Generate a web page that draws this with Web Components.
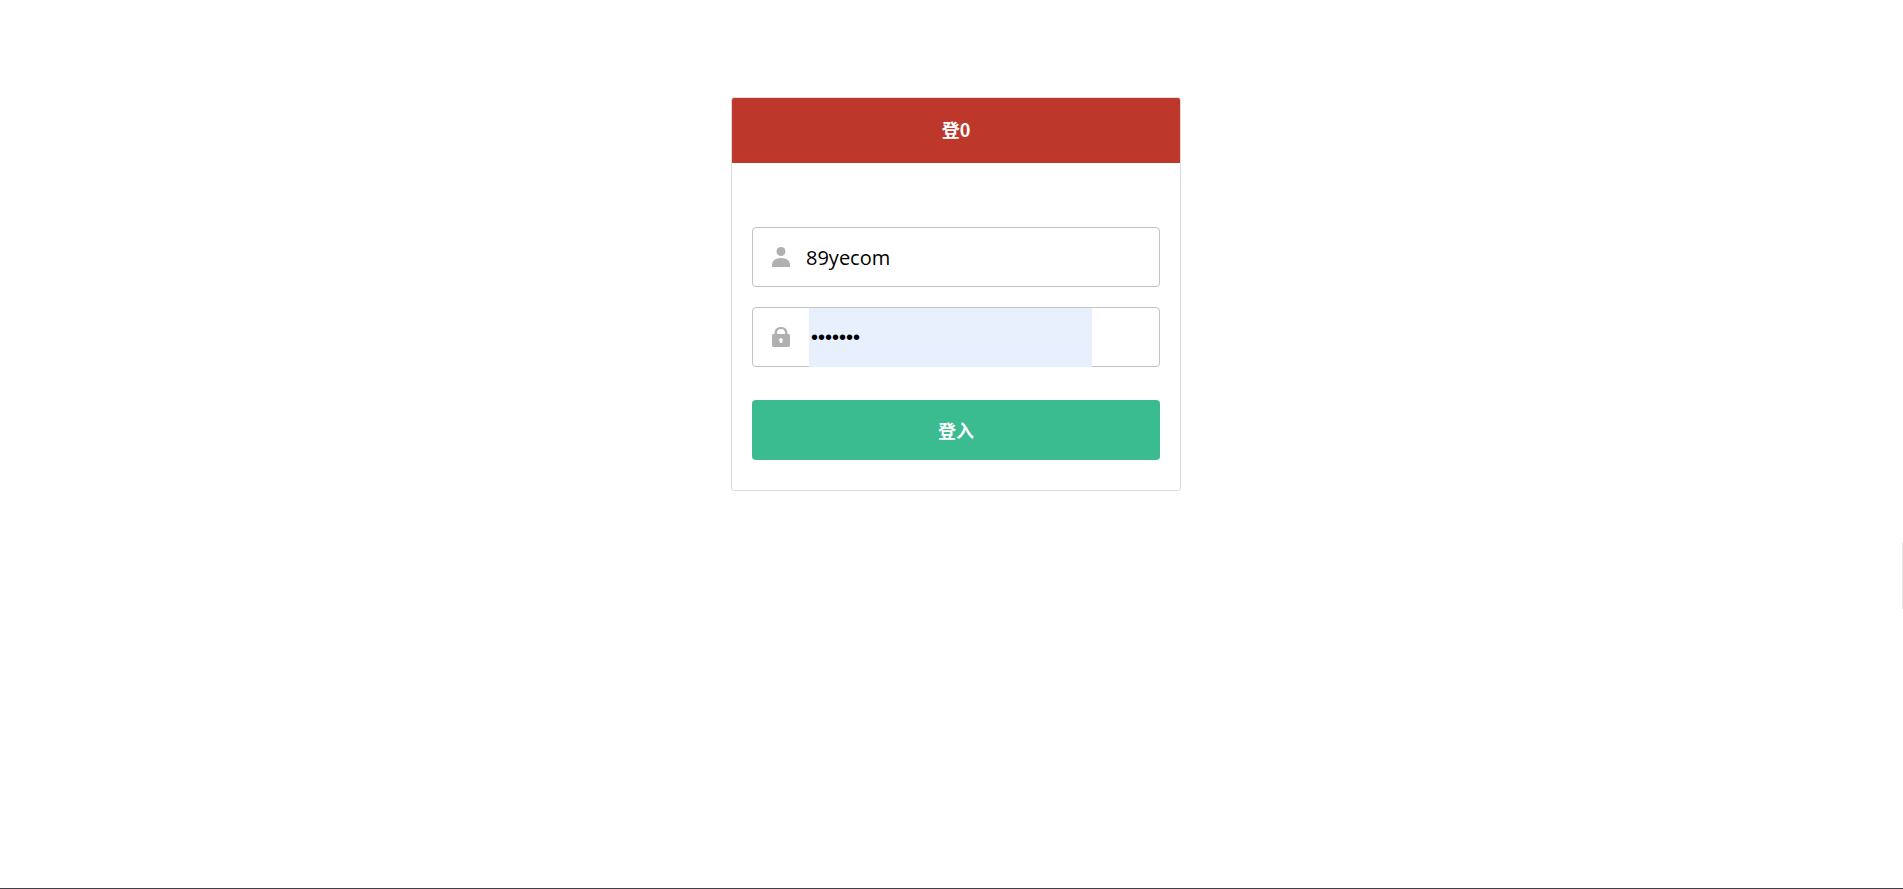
<!DOCTYPE html>
<html lang="zh-CN">
<head>
<meta charset="utf-8">
<title>登入</title>
<style>
    html, body {
        height: 100%;
        margin: 0;
    }
    body {
        background: #fff;
        font-family: "Open Sans", "Noto Sans CJK SC", sans-serif;
        color: #000;
    }
</style>
</head>
<body>
<login-page>
    <login-card heading="登0">
        <login-field name="username" label="用户名" type="text" value="89yecom">
            <svg slot="icon" width="18" height="20" viewBox="0 0 18 20" fill="#b0b0b0">
                <circle cx="9" cy="4.500" r="4.500"/>
                <path d="M0 20v-2c0-4 3-7 9-7s9 3 9 7v2z"/>
            </svg>
        </login-field>
        <login-field name="password" label="密码" type="password" value="1234567" filled>
            <svg slot="icon" width="18" height="20" viewBox="0 0 18 20" fill="#b0b0b0">
                <path fill-rule="evenodd" d="M2.500 7V6c0-4 3-6 6.500-6s6.500 2 6.500 6v1H16c1.500 0 2 .5 2 2v9c0 1.500-.5 2-2 2H2c-1.500 0-2-.5-2-2V9c0-1.500.5-2 2-2zM5 7h8V6c0-2.500-1.500-4-4-4S5 3.500 5 6zM9 11a2 2 0 0 0-1.200 3.500V16h2.400v-1.500A2 2 0 0 0 9 11z"/>
            </svg>
        </login-field>
        <login-button slot="action">登入</login-button>
    </login-card>
</login-page>

<script>
class LoginPage extends HTMLElement {
    constructor() {
        super();
        this.dom = this.attachShadow({mode:'open'});
    }

    createStyle() {
        return `
        <style>
            :host {
                display: flex;
                justify-content: center;
                align-items: flex-start;
                box-sizing: border-box;
                min-height: 100%;
                padding: 97px 0 20px 9px;
                border-bottom: 1px solid #433d48;
            }
            #side-tab {
                position: fixed;
                right: 0;
                top: 61%;
                width: 1px;
                height: 67px;
                background: #e6e6e6;
            }
        </style>
        `;
    }

    createTemplate() {
        return `<slot></slot><div id="side-tab"></div>`;
    }

    connectedCallback() {
        this.dom.innerHTML = this.createStyle() + this.createTemplate();
    }
}
customElements.define('login-page', LoginPage);


class LoginCard extends HTMLElement {
    constructor() {
        super();
        this.dom = this.attachShadow({mode:'open'});
    }

    createStyle() {
        return `
        <style>
            :host {
                display: block;
                box-sizing: border-box;
                width: 100%;
                max-width: 450px;
                border: 1px solid #dedede;
                border-radius: 3px;
                background: #fff;
            }
            h1 {
                margin: 0;
                padding-bottom: 2px;
                border-radius: 2px 2px 0 0;
                background: #be372b;
                color: #fff;
                font-size: 18px;
                line-height: 63px;
                font-family: "Noto Sans CJK SC", sans-serif;
                text-align: center;
            }
            form {
                padding: 64px 20px 30px;
            }
            #fields {
                display: grid;
                gap: 20px;
                margin-bottom: 33px;
            }
        </style>
        `;
    }

    createTemplate() {
        return `
<h1>${this.getAttribute('heading')}</h1>
<form>
    <div id="fields"><slot></slot></div>
    <slot name="action"></slot>
</form>
        `;
    }

    connectedCallback() {
        this.dom.innerHTML = this.createStyle() + this.createTemplate();
    }
}
customElements.define('login-card', LoginCard);


class LoginField extends HTMLElement {
    constructor() {
        super();
        this.dom = this.attachShadow({mode:'open'});
    }

    createStyle() {
        return `
        <style>
            :host {
                display: flex;
                box-sizing: border-box;
                height: 60px;
                border: 1px solid #c2c2c2;
                border-radius: 4px;
                background: #fff;
            }
            label {
                display: flex;
                align-items: center;
                padding: 0 15px 0 19px;
            }
            input {
                box-sizing: border-box;
                flex: 1;
                min-width: 0;
                height: 59px;
                margin: 0;
                padding: 0 1px;
                border: 0;
                outline: 0;
                background: none;
                color: #000;
                font: 20px "Open Sans", sans-serif;
            }
            /* autofilled by the browser */
            :host([filled]) label { padding-right: 19px; }
            :host([filled]) input {
                flex: 0 1 283px;
                padding: 0 2px;
                background: #e8f0fe;
                font-family: "Liberation Sans", sans-serif;
            }
        </style>
        `;
    }

    createTemplate() {
        return `
<label for="data"><slot name="icon"></slot></label>
<input id="data" type="${this.getAttribute('type')}" name="${this.getAttribute('name')}" aria-label="${this.getAttribute('label')}" value="${this.getAttribute('value')}" autocomplete="off" />
        `;
    }

    get value() {
        return this.input.value;
    }

    connectedCallback() {
        this.dom.innerHTML = this.createStyle() + this.createTemplate();
        this.input = this.dom.querySelector('#data');
        this.input.addEventListener('change', ()=>{
            this.dispatchEvent(new CustomEvent('input-data', {bubbles:true, composed:true, detail: this.value}));
        });
    }
}
customElements.define('login-field', LoginField);


class LoginButton extends HTMLElement {
    constructor() {
        super();
        this.dom = this.attachShadow({mode:'open'});
    }

    createStyle() {
        return `
        <style>
            :host { display: block; }
            button {
                display: block;
                width: 100%;
                height: 60px;
                padding: 0;
                border: 0;
                border-radius: 4px;
                background: #3abc90;
                color: #fff;
                font: bold 18px "Noto Sans CJK SC", sans-serif;
                cursor: pointer;
            }
        </style>
        `;
    }

    createTemplate() {
        return `<button type="button"><slot></slot></button>`;
    }

    connectedCallback() {
        this.dom.innerHTML = this.createStyle() + this.createTemplate();
    }
}
customElements.define('login-button', LoginButton);
</script>
</body>
</html>
